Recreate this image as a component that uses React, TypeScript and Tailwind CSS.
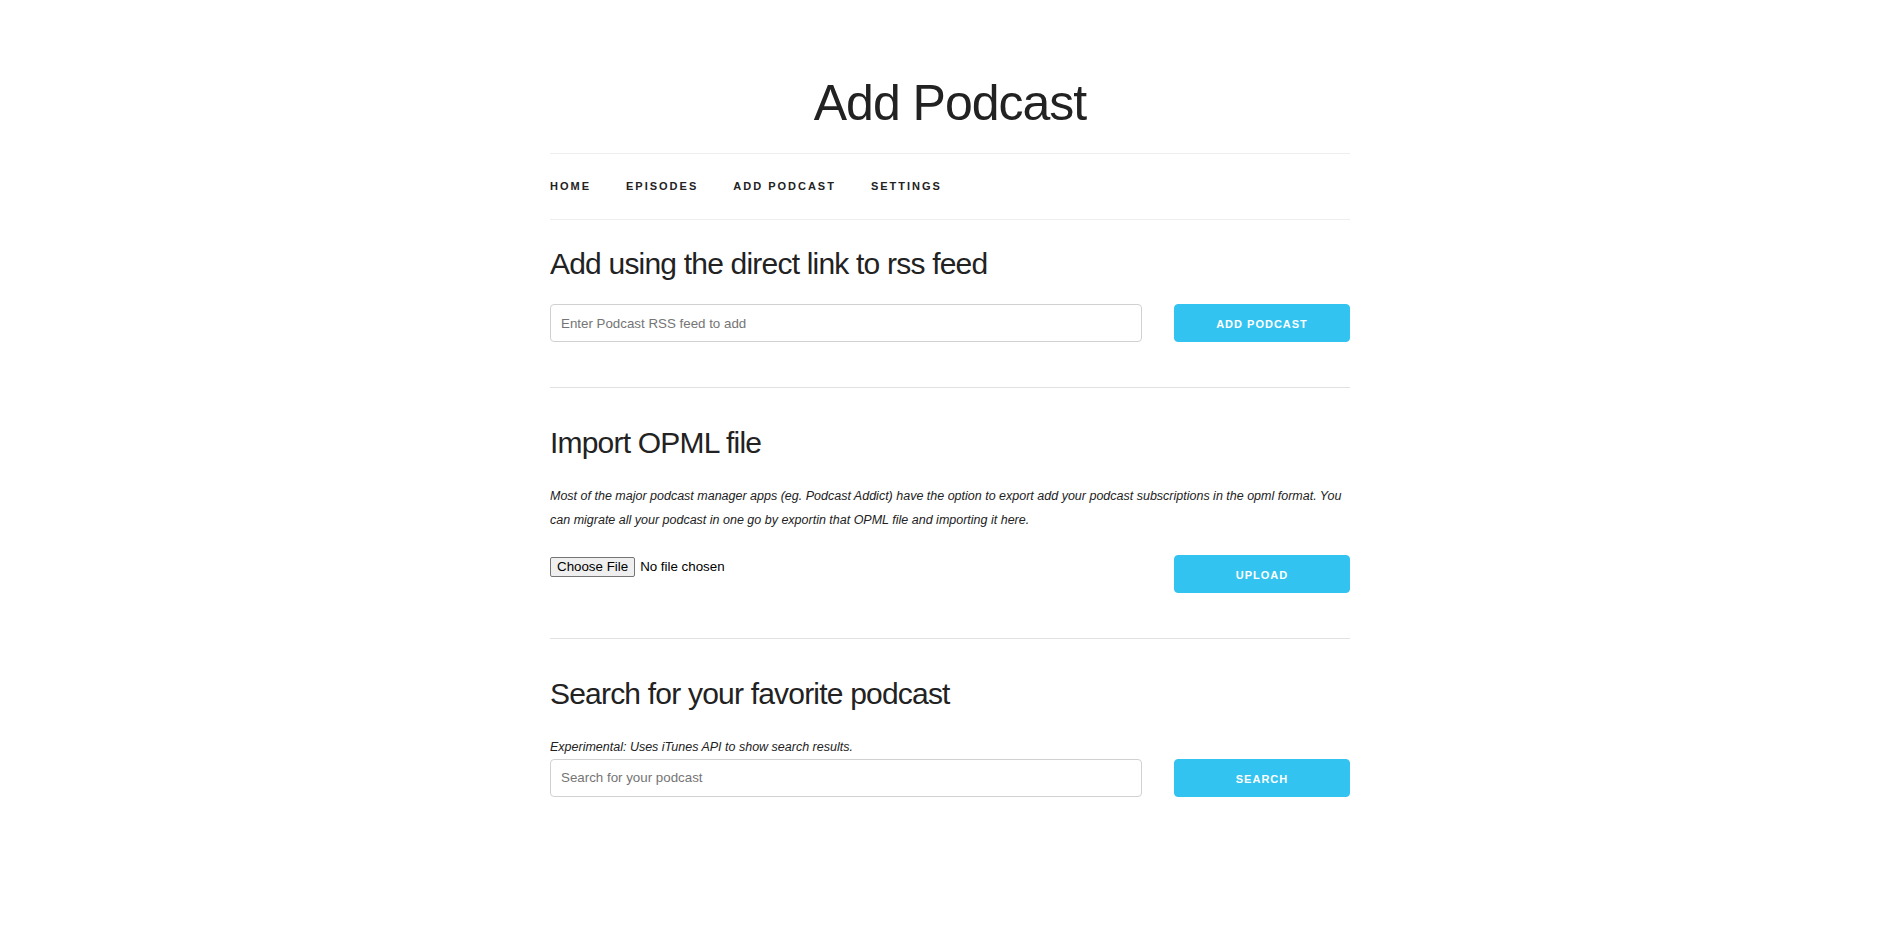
import React from "react";

const font = "font-['Liberation_Sans',Arial,sans-serif]";

function Button({ label }: { label: string }) {
  return (
    <button
      type="button"
      className={`${font} w-full h-[38px] pt-[2px] rounded-[4px] bg-[#33C3F0] border border-[#33C3F0] text-white text-[11px] font-semibold uppercase tracking-[1px] leading-[34px] text-center`}
    >
      {label}
    </button>
  );
}

function TextInput({ placeholder }: { placeholder: string }) {
  return (
    <input
      type="text"
      placeholder={placeholder}
      className={`${font} block w-full h-[38px] px-[10px] py-[6px] bg-white border border-[#D1D1D1] rounded-[4px] text-[13.333px] text-[#222] placeholder:text-[#757575] outline-none`}
    />
  );
}

function Row({ left, right }: { left: React.ReactNode; right: React.ReactNode }) {
  return (
    <div className="flex">
      <div className="w-[592px]">{left}</div>
      <div className="w-[176px] ml-[32px]">{right}</div>
    </div>
  );
}

function H4({ children, className = "" }: { children: React.ReactNode; className?: string }) {
  return (
    <h4 className={`${font} text-[30px] leading-[40.5px] tracking-[-0.8px] font-light text-[#222] mb-[20px] ${className}`}>
      {children}
    </h4>
  );
}

export default function App() {
  const nav = ["Home", "Episodes", "Add Podcast", "Settings"];
  return (
    <div className={`${font} min-h-[930px] bg-white text-[#222] flex justify-center pl-[3px]`}>
      <div className="w-[800px] pt-[73px] pb-[60px]">
        <h1 className="text-[50px] leading-[60px] tracking-[-1px] font-light text-center text-[#222] mb-[20px]">
          Add Podcast
        </h1>

        <nav className="border-t border-b border-[#eeeeee] h-[67px]">
          <ul className="flex">
            {nav.map((n) => (
              <li key={n} className="mr-[35px]">
                <a className="text-[11px] font-semibold uppercase tracking-[2px] leading-[65px] text-[#222]">
                  {n}
                </a>
              </li>
            ))}
          </ul>
        </nav>

        <section className="mt-[23.5px]">
          <H4>Add using the direct link to rss feed</H4>
          <Row
            left={<TextInput placeholder="Enter Podcast RSS feed to add" />}
            right={<Button label="Add Podcast" />}
          />
        </section>

        <hr className="mt-[45px] mb-[35px] border-0 border-t border-[#E1E1E1]" />

        <section>
          <H4>Import OPML file</H4>
          <p className="text-[12.5px] leading-[24px] italic text-[#222] mt-[1px] mb-[23.5px]">
            Most of the major podcast manager apps (eg. Podcast Addict) have the option to export add your podcast
            subscriptions in the opml format. You can migrate all your podcast in one go by exportin that OPML file and
            importing it here.
          </p>
          <Row
            left={
              <label className="flex items-center mt-[1.5px] text-[13.333px] text-black cursor-default">
                <input type="file" className="hidden" />
                <span className="inline-flex items-center h-[20px] px-[6px] border border-[#767676] bg-[#efefef] rounded-[2px] leading-[16px]">
                  Choose File
                </span>
                <span className="ml-[5px]">No file chosen</span>
              </label>
            }
            right={<Button label="Upload" />}
          />
        </section>

        <hr className="mt-[45px] mb-[35px] border-0 border-t border-[#E1E1E1]" />

        <section>
          <H4>Search for your favorite podcast</H4>
          <p className="text-[12.5px] leading-[24px] italic text-[#222]">
            Experimental: Uses iTunes API to show search results.
          </p>
          <Row
            left={<TextInput placeholder="Search for your podcast" />}
            right={<Button label="Search" />}
          />
        </section>
      </div>
    </div>
  );
}
